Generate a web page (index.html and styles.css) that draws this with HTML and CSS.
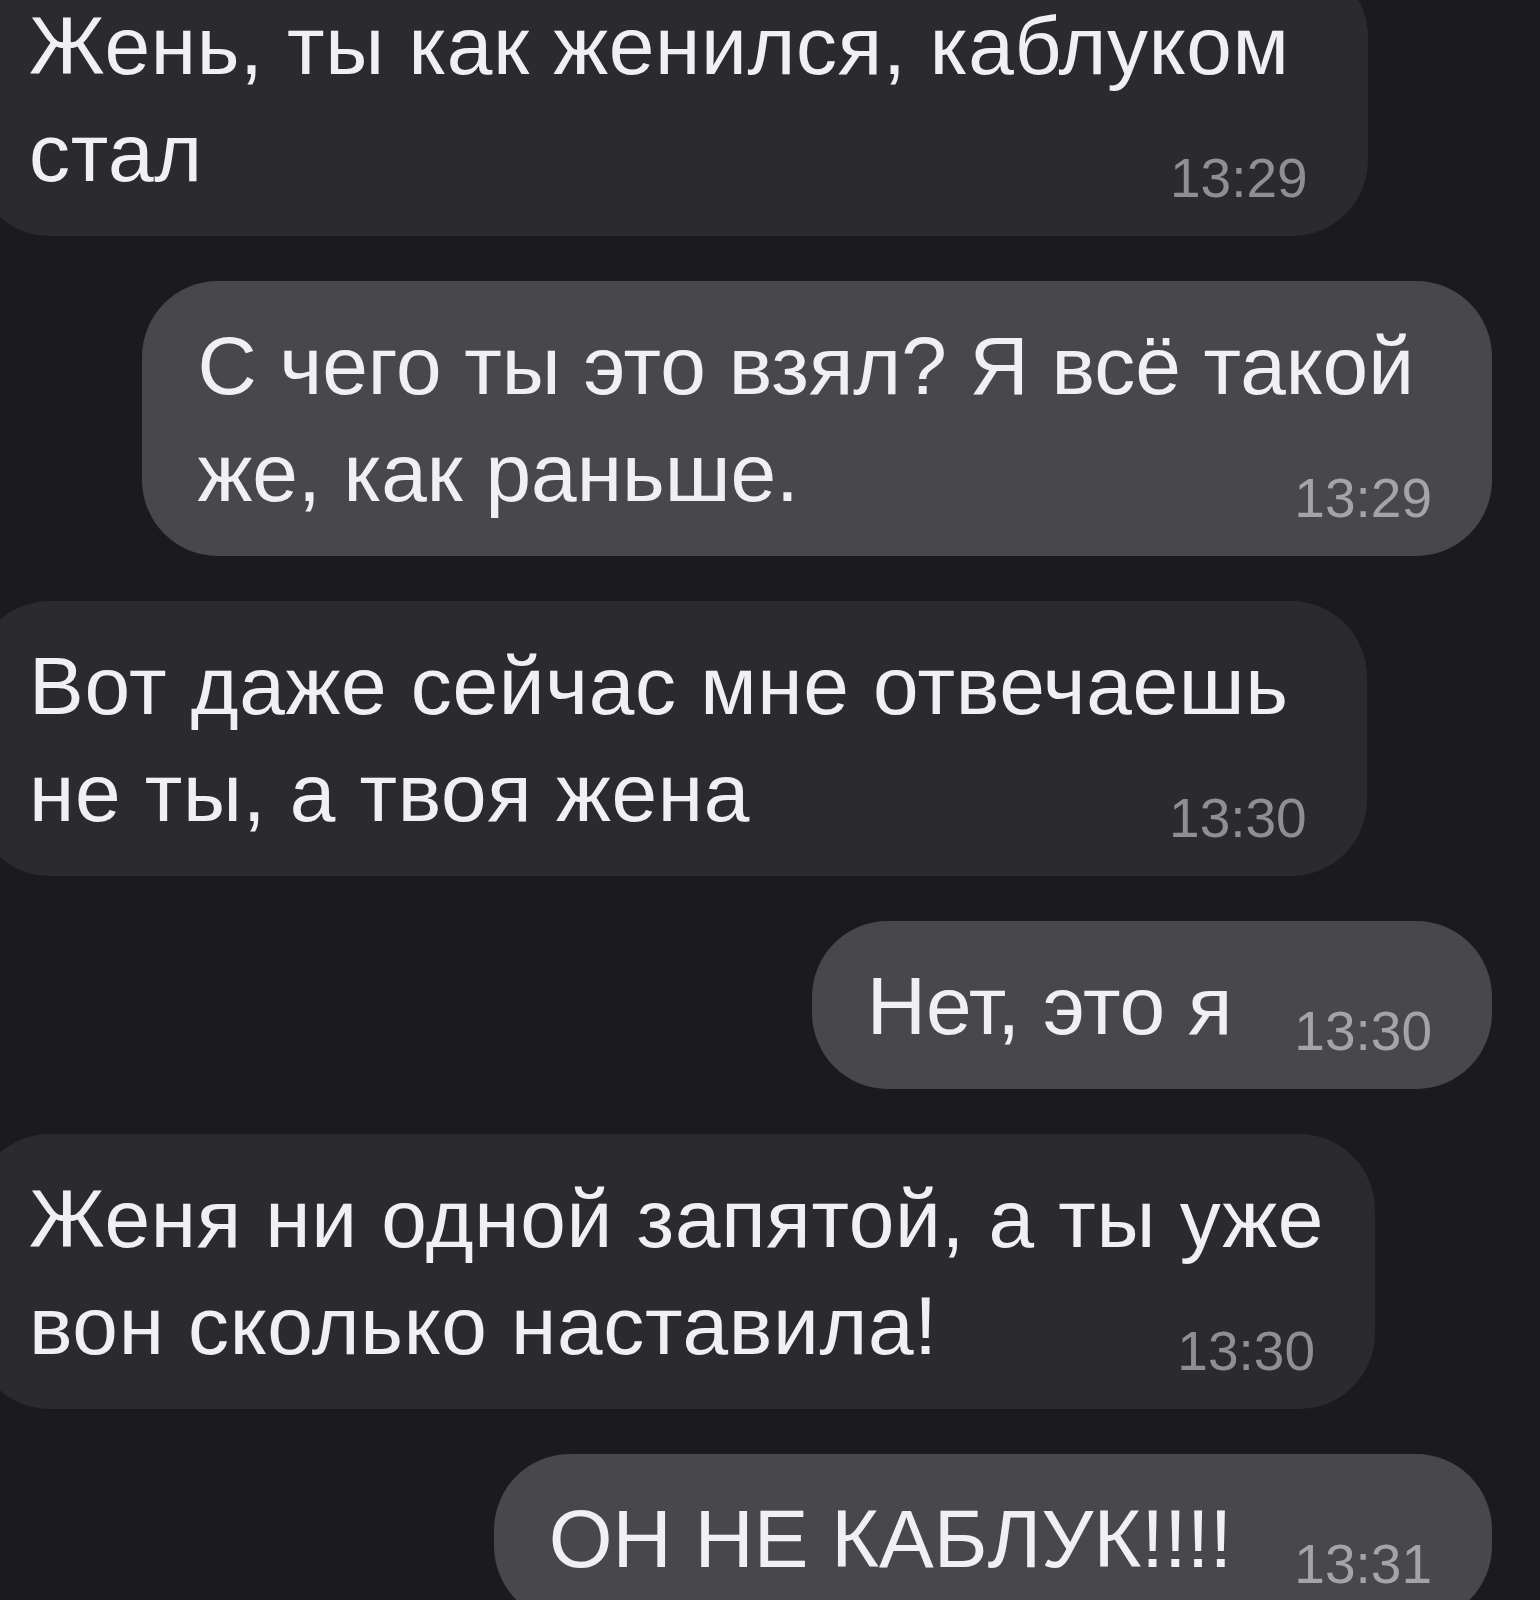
FILE: index.html
```html
<!DOCTYPE html>
<html lang="ru">
<head>
    <meta charset="UTF-8">
    <meta name="viewport" content="width=device-width, initial-scale=1.0">
    <title>Чат</title>
    <link rel="stylesheet" href="styles.css">
</head>
<body>

    <!-- Message list -->
    <div class="chat">
        <div class="msg msg-in">
            Жень, ты как женился, каблуком<br>стал<span class="time">13:29</span>
        </div>
        <div class="msg msg-out">
            С чего ты это взял? Я всё такой<br>же, как раньше.<span class="time">13:29</span>
        </div>
        <div class="msg msg-in">
            Вот даже сейчас мне отвечаешь<br>не ты, а твоя жена<span class="time">13:30</span>
        </div>
        <div class="msg msg-out">
            Нет, это я<span class="time">13:30</span>
        </div>
        <div class="msg msg-in">
            Женя ни одной запятой, а ты уже<br>вон сколько наставила!<span class="time">13:30</span>
        </div>
        <div class="msg msg-out">
            ОН НЕ КАБЛУК!!!!<span class="time">13:31</span>
        </div>
    </div>

</body>
</html>
```

FILE: styles.css
```css
/* Global Styles */
body {
    margin: 0;
    padding: 0;
    height: 1600px;
    overflow: hidden;
    background-color: #1b1b1f;
    color: #f0f0f2;
    font-family: 'Liberation Sans', Arial, sans-serif;
}

/* Chat column, scrolled so the first bubble is cut at the top */
.chat {
    display: flex;
    flex-direction: column;
    gap: 45px;
    margin: -39px 0 0 -26px;
    padding-right: 48px;
}

/* Bubbles */
.msg {
    box-sizing: border-box;
    font-size: 82px;
    line-height: 107px;
    padding: 31px 78px 30px 55px;
    border-radius: 76px;
    white-space: nowrap;
}

.msg-in {
    align-self: flex-start;
    max-width: 1401px;
    letter-spacing: 0.7px;
    background-color: #2b2b2f;
}

.msg-out {
    align-self: flex-end;
    background-color: #48484c;
}

/* Timestamp sits on the last line, pushed to the bottom right */
.time {
    float: right;
    position: relative;
    top: 52px;
    margin-right: -18px;
    margin-left: 62px;
    font-size: 55px;
    line-height: 54px;
    letter-spacing: 0;
    color: #8e8e93;
}

.msg-out .time {
    color: #a3a3a8;
}
```
